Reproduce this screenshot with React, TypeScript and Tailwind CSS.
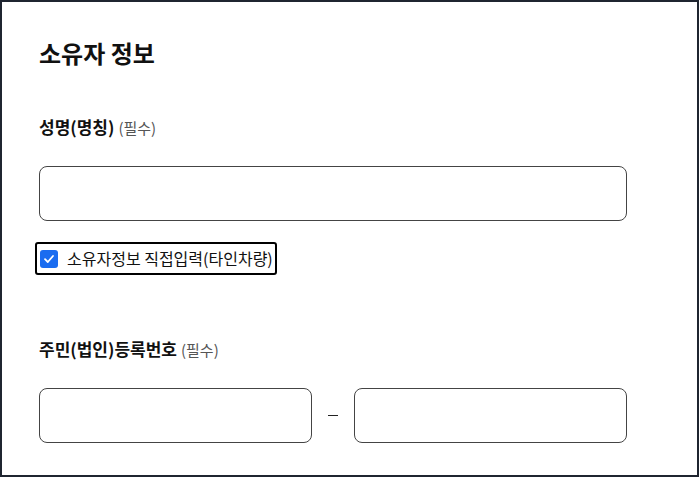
const font = {
  fontFamily: '"Noto Sans CJK KR", "Noto Sans", sans-serif',
};

function Label({ text }: { text: string }) {
  return (
    <div className="flex items-baseline gap-[4px] leading-[24px]">
      <span className="text-[17px] font-bold text-[#111]">{text}</span>
      <span className="text-[15px] text-[#555]">(필수)</span>
    </div>
  );
}

function TextInput({ className = "" }: { className?: string }) {
  return (
    <input
      className={`h-[55px] rounded-[8px] border border-[#444] bg-white px-4 text-[15px] outline-none ${className}`}
      type="text"
    />
  );
}

export default function App() {
  return (
    <div
      className="box-border h-[477px] w-[699px] border-2 border-[#1f2530] bg-white pl-[37px] pt-[35px]"
      style={font}
    >
      <div className="flex w-[588px] flex-col">
        <h2 className="text-[24px] font-bold leading-[32px] text-[#111]">
          소유자 정보
        </h2>

        <div className="mt-[46px]">
          <Label text="성명(명칭)" />
        </div>
        <TextInput className="mt-[26px] w-full" />

        <label className="-ml-[4px] mt-[21px] inline-flex w-fit items-center gap-[9px] rounded-[3px] border-2 border-black py-[4px] pl-[3px] pr-[2px]">
          <span className="flex h-[18px] w-[18px] items-center justify-center rounded-[3px] bg-[#1a6cf0]">
            <svg width="12" height="12" viewBox="0 0 12 12" fill="none">
              <path
                d="M2 6.2 L4.8 9 L10 3"
                stroke="white"
                strokeWidth="1.8"
                strokeLinecap="round"
                strokeLinejoin="round"
              />
            </svg>
          </span>
          <span className="text-[16px] leading-[21px] text-[#111]">
            소유자정보 직접입력(타인차량)
          </span>
        </label>

        <div className="mt-[62px]">
          <Label text="주민(법인)등록번호" />
        </div>
        <div className="mt-[26px] flex items-center">
          <TextInput className="min-w-0 flex-1" />
          <div className="flex w-[42px] justify-center">
            <span className="h-px w-[10px] bg-[#222]" />
          </div>
          <TextInput className="min-w-0 flex-1" />
        </div>
      </div>
    </div>
  );
}
